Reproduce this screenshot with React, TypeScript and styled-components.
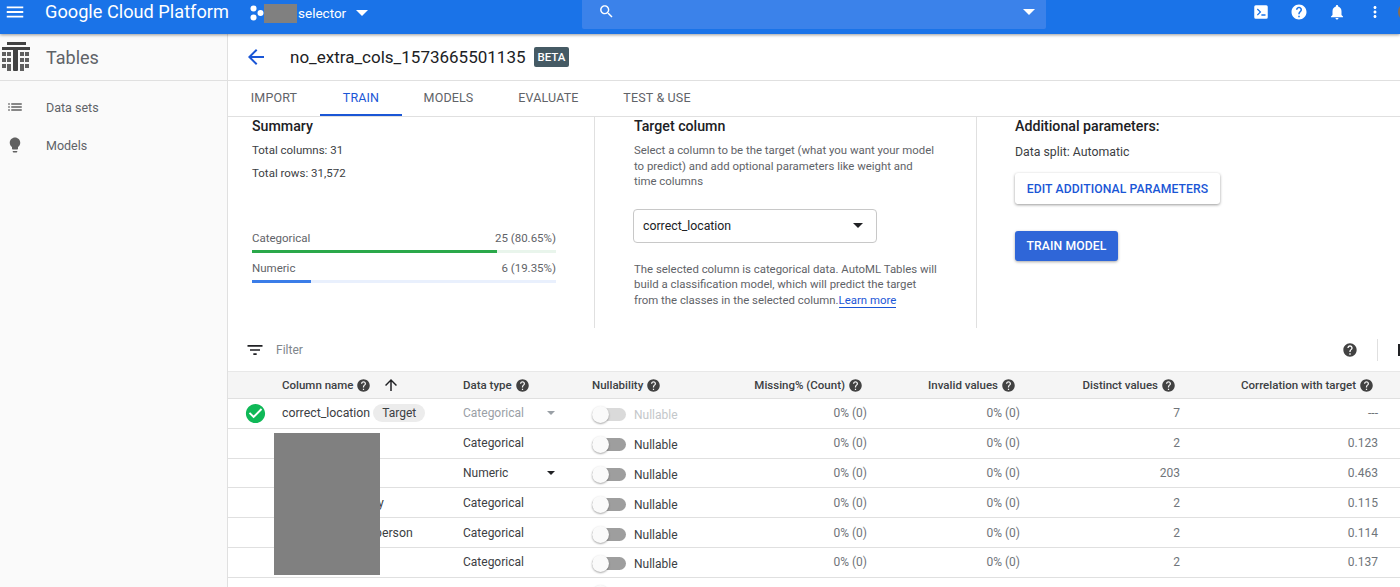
import React from "react";
import styled, { createGlobalStyle } from "styled-components";

const GlobalStyle = createGlobalStyle`
  html, body {
    margin: 0;
    height: 587px;
    overflow: hidden;
    background: #fff;
    font-family: Roboto, "Liberation Sans", sans-serif;
    color: #202124;
  }
  * { box-sizing: border-box; }
`;

const ICONS = {
  menu: "M3 18h18v-2H3v2zm0-5h18v-2H3v2zm0-7v2h18V6H3z",
  help: "M12 2C6.48 2 2 6.48 2 12s4.48 10 10 10 10-4.48 10-10S17.52 2 12 2zm1 17h-2v-2h2v2zm2.07-7.75l-.9.92C13.45 12.9 13 13.5 13 15h-2v-.5c0-1.1.45-2.1 1.17-2.83l1.24-1.26c.37-.36.59-.86.59-1.41 0-1.1-.9-2-2-2s-2 .9-2 2H8c0-2.21 1.79-4 4-4s4 1.79 4 4c0 .88-.36 1.68-.93 2.25z",
  bell: "M12 22c1.1 0 2-.9 2-2h-4c0 1.1.89 2 2 2zm6-6v-5c0-3.07-1.64-5.64-4.5-6.32V4c0-.83-.67-1.5-1.5-1.5s-1.5.67-1.5 1.5v.68C7.63 5.36 6 7.92 6 11v5l-2 2v1h16v-1l-2-2z",
  more: "M12 8c1.1 0 2-.9 2-2s-.9-2-2-2-2 .9-2 2 .9 2 2 2zm0 2c-1.1 0-2 .9-2 2s.9 2 2 2 2-.9 2-2-.9-2-2-2zm0 6c-1.1 0-2 .9-2 2s.9 2 2 2 2-.9 2-2-.9-2-2-2z",
  search: "M15.5 14h-.79l-.28-.27C15.41 12.59 16 11.11 16 9.5 16 5.91 13.09 3 9.5 3S3 5.91 3 9.5 5.91 16 9.5 16c1.61 0 3.09-.59 4.23-1.57l.27.28v.79l5 4.99L20.49 19l-4.99-5zm-6 0C7.01 14 5 11.99 5 9.5S7.01 5 9.5 5 14 7.01 14 9.5 11.99 14 9.5 14z",
  back: "M20 11H7.83l5.59-5.59L12 4l-8 8 8 8 1.41-1.41L7.83 13H20v-2z",
  up: "M4 12l1.41 1.41L11 7.83V20h2V7.83l5.58 5.59L20 12l-8-8-8 8z",
  filter: "M10 18h4v-2h-4v2zM3 6v2h18V6H3zm3 7h12v-2H6v2z",
  check: "M12 2C6.48 2 2 6.48 2 12s4.48 10 10 10 10-4.48 10-10S17.52 2 12 2zm-2 15l-5-5 1.41-1.41L10 14.17l7.59-7.59L19 8l-9 9z",
  list: "M3 13h2v-2H3v2zm0 4h2v-2H3v2zm0-8h2V7H3v2zm4 4h14v-2H7v2zm0 4h14v-2H7v2zM7 7v2h14V7H7z",
  bulb: "M9 21c0 .55.45 1 1 1h4c.55 0 1-.45 1-1v-1H9v1zm3-19C8.14 2 5 5.14 5 9c0 2.38 1.19 4.47 3 5.74V17c0 .55.45 1 1 1h6c.55 0 1-.45 1-1v-2.26c1.81-1.27 3-3.36 3-5.74 0-3.86-3.14-7-7-7z",
  console: "M5 3h14a2 2 0 0 1 2 2v14a2 2 0 0 1-2 2H5a2 2 0 0 1-2-2V5a2 2 0 0 1 2-2zm1.5 5.5L10 12l-3.5 3.5 1.2 1.2L12.4 12 7.7 7.3 6.5 8.5zM12.5 15v2H18v-2h-5.5z",
};

const Icon = ({ name, size, color }: { name: keyof typeof ICONS; size: number; color: string }) => (
  <svg width={size} height={size} viewBox="0 0 24 24" style={{ flex: "none", display: "block" }}>
    <path fill={color} fillRule="evenodd" d={ICONS[name]} />
  </svg>
);

const TablesLogo = () => (
  <svg width="30" height="30" viewBox="0 0 30 30" style={{ flex: "none", display: "block" }}>
    <rect x="6" y="0" width="19" height="3" fill="#424242" />
    <rect x="1" y="5" width="28" height="3" fill="#424242" />
    <rect x="12" y="5" width="5" height="24" rx="1" fill="#424242" />
    {[10, 16, 22].map((y) =>
      [1, 6, 19, 24].map((x) => (
        <rect key={`${x}-${y}`} x={x} y={y} width="4" height="4" fill="#616161" />
      ))
    )}
    <rect x="6" y="26" width="4" height="3" fill="#616161" />
    <rect x="19" y="26" width="4" height="3" fill="#616161" />
  </svg>
);

const TopBar = styled.header`
  position: relative;
  z-index: 2;
  flex: none;
  height: 34px;
  display: flex;
  align-items: flex-start;
  background: #1a73e8;
  box-shadow: 0 1px 3px rgba(0, 0, 0, 0.4);
  color: #fff;
`;

const MenuSlot = styled.div`
  flex: none;
  width: 45px;
  height: 24px;
  padding-left: 4px;
  display: flex;
  align-items: center;
`;

const Brand = styled.div`
  flex: none;
  width: 205px;
  height: 24px;
  font-size: 18.2px;
  line-height: 24px;
  white-space: nowrap;
`;

const ProjectPicker = styled.div`
  flex: none;
  width: 332px;
  height: 26px;
  display: flex;
  align-items: center;
  font-size: 13.5px;
`;

const Redacted = styled.span`
  width: 33px;
  height: 19px;
  margin: 0 1px 0 0;
  background: #808080;
`;

const Caret = styled.span<{ $color: string; $size?: number }>`
  flex: none;
  width: 0;
  height: 0;
  border-left: ${(p) => p.$size ?? 5}px solid transparent;
  border-right: ${(p) => p.$size ?? 5}px solid transparent;
  border-top: ${(p) => p.$size ?? 5}px solid ${(p) => p.$color};
`;

const SearchBox = styled.div`
  flex: none;
  width: 464px;
  height: 29px;
  padding: 0 11px 6px 16px;
  display: flex;
  align-items: center;
  justify-content: space-between;
  background: #3b82ea;
  border-radius: 0 0 2px 2px;
`;

const TopActions = styled.div`
  flex: none;
  height: 24px;
  padding-left: 206px;
  display: flex;
  align-items: center;
  gap: 20px;
`;

const Avatar = styled.span`
  width: 20px;
  height: 20px;
  margin-left: -6px;
  flex: none;
  border-radius: 50%;
  background: #8a6d4f;
`;

const Body = styled.div`
  flex: 1;
  min-height: 0;
  display: flex;
`;

const Shell = styled.div`
  height: 587px;
  display: flex;
  flex-direction: column;
  overflow: hidden;
`;

const Sidebar = styled.aside`
  flex: none;
  width: 228px;
  background: #fafafa;
  border-right: 1px solid #e0e0e0;
`;

const SideHeader = styled.div`
  height: 47px;
  padding-left: 1px;
  display: flex;
  align-items: center;
  gap: 15px;
  border-bottom: 1px solid #e0e0e0;
  font-size: 18px;
  color: #5f6368;
`;

const SideList = styled.nav`
  padding-top: 7px;
`;

const SideItem = styled.div`
  height: 38px;
  padding-left: 6px;
  display: flex;
  align-items: center;
  gap: 22px;
  font-size: 12.5px;
  color: #5f6368;
`;

const Main = styled.main`
  position: relative;
  flex: 1;
  min-width: 0;
`;

const TitleBar = styled.div`
  height: 47px;
  padding-left: 16px;
  display: flex;
  align-items: center;
  border-bottom: 1px solid #e0e0e0;
`;

const Title = styled.h1`
  margin: 0 8px 0 0;
  padding-left: 22px;
  font-size: 17px;
  font-weight: 400;
  color: #202124;
`;

const Beta = styled.span`
  padding: 3px 4px;
  border-radius: 2px;
  background: #455a64;
  color: #fff;
  font-size: 11.5px;
  font-weight: 500;
`;

const Tabs = styled.div`
  height: 36px;
  display: flex;
  border-bottom: 1px solid #e0e0e0;
`;

const Tab = styled.div<{ $active?: boolean; $width: number }>`
  width: ${(p) => p.$width}px;
  height: 35px;
  display: flex;
  align-items: center;
  justify-content: center;
  font-size: 12.5px;
  font-weight: 400;
  letter-spacing: 0.15px;
  color: ${(p) => (p.$active ? "#1a56d6" : "#5f6368")};
  border-bottom: 2px solid ${(p) => (p.$active ? "#1a56d6" : "transparent")};
`;

const Panels = styled.section`
  height: 211px;
  display: grid;
  grid-template-columns: 367px 382px 1fr;
`;

const Panel = styled.div<{ $left: number; $divided?: boolean }>`
  padding-left: ${(p) => p.$left}px;
  border-right: ${(p) => (p.$divided ? "1px solid #e0e0e0" : "none")};
`;

const PanelTitle = styled.h2`
  margin: 0;
  height: 18px;
  font-size: 14.2px;
  line-height: 18px;
  font-weight: 500;
  color: #202124;
`;

const Fact = styled.p<{ $top: number; $size?: number }>`
  margin: ${(p) => p.$top}px 0 0;
  font-size: ${(p) => p.$size ?? 11.5}px;
  line-height: 16px;
  color: #3c4043;
`;

const StatLabel = styled.div<{ $top: number }>`
  width: 304px;
  margin-top: ${(p) => p.$top}px;
  display: flex;
  justify-content: space-between;
  font-size: 11.5px;
  line-height: 16px;
  color: #5f6368;
`;

const StatTrack = styled.div<{ $color: string }>`
  width: 304px;
  height: 3px;
  margin-top: 4px;
  background: ${(p) => p.$color};
`;

const StatFill = styled.div<{ $color: string }>`
  height: 100%;
  background: ${(p) => p.$color};
`;

const HelpText = styled.p<{ $top: number }>`
  margin: ${(p) => p.$top}px 0 0;
  font-size: 11.4px;
  line-height: 15.5px;
  white-space: nowrap;
  color: #5f6368;
`;

const LearnMore = styled.span`
  color: #1a56d6;
  border-bottom: 1px solid #1a56d6;
`;

const SelectBox = styled.div`
  width: 244px;
  height: 34px;
  margin: 19px 0 0 -1px;
  padding: 0 13px 0 9px;
  display: flex;
  align-items: center;
  justify-content: space-between;
  border: 1px solid #c8c8c8;
  border-radius: 4px;
  font-size: 12.3px;
  color: #202124;
`;

const OutlineButton = styled.div`
  width: 205px;
  height: 31px;
  margin-top: 13px;
  display: flex;
  align-items: center;
  justify-content: center;
  border-radius: 3px;
  background: #fff;
  box-shadow: 0 1px 3px rgba(0, 0, 0, 0.4);
  color: #1a56d6;
  font-size: 12.2px;
  font-weight: 500;
  letter-spacing: 0.1px;
`;

const PrimaryButton = styled.div`
  width: 103px;
  height: 30px;
  margin-top: 27px;
  display: flex;
  align-items: center;
  justify-content: center;
  border-radius: 3px;
  background: #2f66d8;
  box-shadow: 0 1px 3px rgba(0, 0, 0, 0.35);
  color: #fff;
  font-size: 12.2px;
  font-weight: 500;
  letter-spacing: 0.1px;
`;

const FilterBar = styled.div`
  height: 43px;
  padding-left: 17px;
  display: flex;
  align-items: center;
  font-size: 12px;
  color: #80868b;
`;

const FilterLabel = styled.span`
  flex: 1;
  margin-left: 11px;
`;

const FilterEnd = styled.div`
  width: 23px;
  height: 22px;
  margin-left: 19px;
  border-left: 1px solid #e0e0e0;
  display: flex;
  justify-content: flex-end;
  align-items: center;
`;

const EndMark = styled.span`
  width: 2px;
  height: 12px;
  background: #202124;
`;

const COLUMNS = "54px 181px 129px 108px 167px 153px 160px 198px 22px";

const HeadRow = styled.div`
  height: 28px;
  display: grid;
  grid-template-columns: ${COLUMNS};
  align-items: center;
  background: #f5f5f5;
  border-top: 1px solid #e8e8e8;
  border-bottom: 1px solid #e0e0e0;
  font-size: 11.5px;
  font-weight: 500;
  color: #3c4043;
`;

const HeadCell = styled.div<{ $end?: boolean }>`
  display: flex;
  align-items: center;
  gap: 3px;
  padding-right: ${(p) => (p.$end ? 4 : 0)}px;
  justify-content: ${(p) => (p.$end ? "flex-end" : "flex-start")};
`;

const SortArrow = styled.span`
  margin-left: 8px;
`;

const Row = styled.div`
  height: 29.8px;
  display: grid;
  grid-template-columns: ${COLUMNS};
  align-items: center;
  border-bottom: 1px solid #e0e0e0;
  font-size: 12px;
  color: #3c4043;
`;

const StatusCell = styled.div`
  padding-left: 16px;
`;

const NameCell = styled.div<{ $indent?: number }>`
  display: flex;
  align-items: center;
  gap: 3px;
  padding-left: ${(p) => p.$indent ?? 0}px;
  font-size: 12.3px;
`;

const TargetChip = styled.span`
  padding: 2px 9px;
  border-radius: 10px;
  background: #ececec;
  font-size: 12px;
`;

const TypeCell = styled.div<{ $muted?: boolean }>`
  width: 92px;
  display: flex;
  align-items: center;
  justify-content: space-between;
  color: ${(p) => (p.$muted ? "#9aa0a6" : "#3c4043")};
`;

const NullCell = styled.div<{ $muted?: boolean }>`
  display: flex;
  align-items: center;
  gap: 8px;
  padding-top: 4px;
  color: ${(p) => (p.$muted ? "#c4c7ca" : "#3c4043")};
`;

const Toggle = styled.span<{ $muted?: boolean }>`
  position: relative;
  flex: none;
  width: 34px;
  height: 13px;
  margin-top: -1px;
  border-radius: 7px;
  background: ${(p) => (p.$muted ? "#dadada" : "#9e9e9e")};

  &::after {
    content: "";
    position: absolute;
    left: 0;
    top: -2px;
    width: 17px;
    height: 17px;
    border-radius: 50%;
    background: #fafafa;
    box-shadow: 0 1px 2px rgba(0, 0, 0, 0.35);
  }
`;

const NumCell = styled.div`
  text-align: right;
  color: #70757a;
`;

const RedactBlock = styled.div`
  position: absolute;
  left: 46px;
  top: 399px;
  width: 106px;
  height: 142px;
  background: #808080;
`;

const HELP = "#424242";

type RowData = {
  name: string;
  indent?: number;
  type: string;
  caret?: boolean;
  distinct: string;
  corr: string;
};

const rows: RowData[] = [
  { name: "", type: "Categorical", distinct: "2", corr: "0.123" },
  { name: "", type: "Numeric", caret: true, distinct: "203", corr: "0.463" },
  { name: "y", indent: 96, type: "Categorical", distinct: "2", corr: "0.115" },
  { name: "person", indent: 93, type: "Categorical", distinct: "2", corr: "0.114" },
  { name: "", type: "Categorical", distinct: "2", corr: "0.137" },
];

const Head = ({ label, end }: { label: string; end?: boolean }) => (
  <HeadCell $end={end}>
    {label}
    <Icon name="help" size={15} color={HELP} />
  </HeadCell>
);

export default function App() {
  return (
    <>
      <GlobalStyle />
      <Shell>
        <TopBar>
          <MenuSlot>
            <Icon name="menu" size={22} color="#fff" />
          </MenuSlot>
          <Brand>Google Cloud Platform</Brand>
          <ProjectPicker>
            <svg width="14" height="16" viewBox="0 0 14 16" style={{ flex: "none" }}>
              <circle cx="3.5" cy="3.5" r="3" fill="#fff" />
              <circle cx="10.5" cy="8" r="3" fill="#fff" />
              <circle cx="3.5" cy="12.5" r="3" fill="#fff" />
            </svg>
            <Redacted />
            selector
            <Caret $color="#fff" $size={6} style={{ marginLeft: 10 }} />
          </ProjectPicker>
          <SearchBox>
            <Icon name="search" size={17} color="#fff" />
            <Caret $color="#fff" $size={6} />
          </SearchBox>
          <TopActions>
            <Icon name="console" size={18} color="#fff" />
            <Icon name="help" size={18} color="#fff" />
            <Icon name="bell" size={18} color="#fff" />
            <Icon name="more" size={18} color="#fff" />
            <Avatar />
          </TopActions>
        </TopBar>
        <Body>
          <Sidebar>
            <SideHeader>
              <TablesLogo />
              Tables
            </SideHeader>
            <SideList>
              <SideItem>
                <Icon name="list" size={18} color="#616161" />
                Data sets
              </SideItem>
              <SideItem>
                <Icon name="bulb" size={18} color="#616161" />
                Models
              </SideItem>
            </SideList>
          </Sidebar>
          <Main>
            <TitleBar>
              <Icon name="back" size={24} color="#1a56d6" />
              <Title>no_extra_cols_1573665501135</Title>
              <Beta>BETA</Beta>
            </TitleBar>
            <Tabs>
              <Tab $width={92}>IMPORT</Tab>
              <Tab $width={82} $active>TRAIN</Tab>
              <Tab $width={93}>MODELS</Tab>
              <Tab $width={107}>EVALUATE</Tab>
              <Tab $width={110}>TEST &amp; USE</Tab>
            </Tabs>
            <Panels>
              <Panel $left={24} $divided>
                <PanelTitle>Summary</PanelTitle>
                <Fact $top={7}>Total columns: 31</Fact>
                <Fact $top={7}>Total rows: 31,572</Fact>
                <StatLabel $top={49}>
                  <span>Categorical</span>
                  <span>25 (80.65%)</span>
                </StatLabel>
                <StatTrack $color="#e9f5ec">
                  <StatFill $color="#2aa84a" style={{ width: "80.65%" }} />
                </StatTrack>
                <StatLabel $top={7}>
                  <span>Numeric</span>
                  <span>6 (19.35%)</span>
                </StatLabel>
                <StatTrack $color="#e9f0fd">
                  <StatFill $color="#3b7de8" style={{ width: "19.35%" }} />
                </StatTrack>
              </Panel>
              <Panel $left={39} $divided>
                <PanelTitle>Target column</PanelTitle>
                <HelpText $top={8}>
                  Select a column to be the target (what you want your model
                  <br />
                  to predict) and add optional parameters like weight and
                  <br />
                  time columns
                </HelpText>
                <SelectBox>
                  correct_location
                  <Caret $color="#202124" />
                </SelectBox>
                <HelpText $top={19}>
                  The selected column is categorical data. AutoML Tables will
                  <br />
                  build a classification model, which will predict the target
                  <br />
                  from the classes in the selected column.<LearnMore>Learn more</LearnMore>
                </HelpText>
              </Panel>
              <Panel $left={38}>
                <PanelTitle>Additional parameters:</PanelTitle>
                <Fact $top={9} $size={12.3}>Data split: Automatic</Fact>
                <OutlineButton>EDIT ADDITIONAL PARAMETERS</OutlineButton>
                <PrimaryButton>TRAIN MODEL</PrimaryButton>
              </Panel>
            </Panels>
            <FilterBar>
              <Icon name="filter" size={20} color="#202124" />
              <FilterLabel>Filter</FilterLabel>
              <Icon name="help" size={16} color={HELP} />
              <FilterEnd>
                <EndMark />
              </FilterEnd>
            </FilterBar>
            <HeadRow>
              <span />
              <HeadCell>
                Column name
                <Icon name="help" size={15} color={HELP} />
                <SortArrow>
                  <Icon name="up" size={18} color="#202124" />
                </SortArrow>
              </HeadCell>
              <Head label="Data type" />
              <Head label="Nullability" />
              <Head label="Missing% (Count)" end />
              <Head label="Invalid values" end />
              <Head label="Distinct values" end />
              <Head label="Correlation with target" end />
            </HeadRow>
            <Row>
              <StatusCell>
                <Icon name="check" size={23} color="#0fb857" />
              </StatusCell>
              <NameCell>
                correct_location
                <TargetChip>Target</TargetChip>
              </NameCell>
              <TypeCell $muted>
                Categorical
                <Caret $color="#9aa0a6" $size={4} />
              </TypeCell>
              <NullCell $muted>
                <Toggle $muted />
                Nullable
              </NullCell>
              <NumCell>0% (0)</NumCell>
              <NumCell>0% (0)</NumCell>
              <NumCell>7</NumCell>
              <NumCell>---</NumCell>
            </Row>
            {rows.map((r, i) => (
              <Row key={i}>
                <span />
                <NameCell $indent={r.indent}>{r.name}</NameCell>
                <TypeCell>
                  {r.type}
                  {r.caret && <Caret $color="#202124" $size={4} />}
                </TypeCell>
                <NullCell>
                  <Toggle />
                  Nullable
                </NullCell>
                <NumCell>0% (0)</NumCell>
                <NumCell>0% (0)</NumCell>
                <NumCell>{r.distinct}</NumCell>
                <NumCell>{r.corr}</NumCell>
              </Row>
            ))}
            <Row>
              <span />
              <span />
              <span />
              <NullCell>
                <Toggle />
              </NullCell>
            </Row>
            <RedactBlock />
          </Main>
        </Body>
      </Shell>
    </>
  );
}
